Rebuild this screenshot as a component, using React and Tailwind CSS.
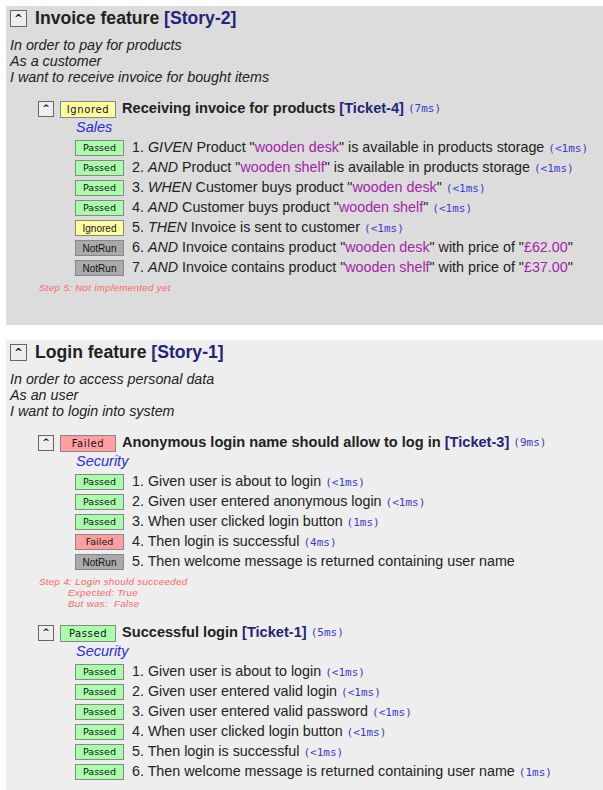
import React from 'react';

const features = [
  {
    title: 'Invoice feature',
    story: '[Story-2]',
    bg: 'bg-[#dcdcdc]',
    narrative: ['In order to pay for products', 'As a customer', 'I want to receive invoice for bought items'],
    scenarios: [
      {
        status: 'Ignored',
        title: 'Receiving invoice for products',
        ticket: '[Ticket-4]',
        time: '(7ms)',
        category: 'Sales',
        steps: [
          { status: 'Passed', parts: ['1. ', { k: 'GIVEN' }, ' Product "', { p: 'wooden desk' }, '" is available in products storage'], time: '(<1ms)' },
          { status: 'Passed', parts: ['2. ', { k: 'AND' }, ' Product "', { p: 'wooden shelf' }, '" is available in products storage'], time: '(<1ms)' },
          { status: 'Passed', parts: ['3. ', { k: 'WHEN' }, ' Customer buys product "', { p: 'wooden desk' }, '"'], time: '(<1ms)' },
          { status: 'Passed', parts: ['4. ', { k: 'AND' }, ' Customer buys product "', { p: 'wooden shelf' }, '"'], time: '(<1ms)' },
          { status: 'Ignored', parts: ['5. ', { k: 'THEN' }, ' Invoice is sent to customer'], time: '(<1ms)' },
          { status: 'NotRun', parts: ['6. ', { k: 'AND' }, ' Invoice contains product "', { p: 'wooden desk' }, '" with price of "', { p: '£62.00' }, '"'] },
          { status: 'NotRun', parts: ['7. ', { k: 'AND' }, ' Invoice contains product "', { p: 'wooden shelf' }, '" with price of "', { p: '£37.00' }, '"'] },
        ],
        error: ['Step 5: Not implemented yet'],
      },
    ],
  },
  {
    title: 'Login feature',
    story: '[Story-1]',
    bg: 'bg-[#eeeeee]',
    narrative: ['In order to access personal data', 'As an user', 'I want to login into system'],
    scenarios: [
      {
        status: 'Failed',
        title: 'Anonymous login name should allow to log in',
        ticket: '[Ticket-3]',
        time: '(9ms)',
        category: 'Security',
        steps: [
          { status: 'Passed', parts: ['1. Given user is about to login'], time: '(<1ms)' },
          { status: 'Passed', parts: ['2. Given user entered anonymous login'], time: '(<1ms)' },
          { status: 'Passed', parts: ['3. When user clicked login button'], time: '(1ms)' },
          { status: 'Failed', parts: ['4. Then login is successful'], time: '(4ms)' },
          { status: 'NotRun', parts: ['5. Then welcome message is returned containing user name'] },
        ],
        error: ['Step 4: Login should succeeded', 'Expected: True', 'But was:  False'],
      },
      {
        status: 'Passed',
        title: 'Successful login',
        ticket: '[Ticket-1]',
        time: '(5ms)',
        category: 'Security',
        steps: [
          { status: 'Passed', parts: ['1. Given user is about to login'], time: '(<1ms)' },
          { status: 'Passed', parts: ['2. Given user entered valid login'], time: '(<1ms)' },
          { status: 'Passed', parts: ['3. Given user entered valid password'], time: '(<1ms)' },
          { status: 'Passed', parts: ['4. When user clicked login button'], time: '(<1ms)' },
          { status: 'Passed', parts: ['5. Then login is successful'], time: '(<1ms)' },
          { status: 'Passed', parts: ['6. Then welcome message is returned containing user name'], time: '(1ms)' },
        ],
      },
    ],
  },
];

const badgeColors = {
  Passed: 'bg-[#aaffaa]',
  Failed: 'bg-[#ff9f9f]',
  Ignored: 'bg-[#ffffa0]',
  NotRun: 'bg-[#aaaaaa]',
};

const badgeFont = {
  Passed: "font-['DejaVu_Sans',sans-serif] text-[9.5px]",
  Failed: "font-['DejaVu_Sans',sans-serif] text-[9.5px]",
  Ignored: "font-['Liberation_Sans',Arial,sans-serif] text-[10px]",
  NotRun: "font-['Liberation_Sans',Arial,sans-serif] text-[10px]",
};

const Toggle = ({ big }) => (
  <span
    className={`flex items-center justify-center border border-[#666] bg-[#eeeeee] text-[#111] font-bold font-['DejaVu_Sans',sans-serif] shrink-0 ${
      big ? 'w-[17px] h-[17px] text-[10px]' : 'w-[16px] h-[16px] text-[9px]'
    }`}
  >
    ^
  </span>
);

const Duration = ({ t }) => (
  <span className="font-['DejaVu_Sans_Mono',monospace] text-[11px] text-[#3a3ad0] ml-[4px]">{t}</span>
);

const Step = ({ step }) => (
  <div className="flex items-center h-[20px] ml-[37px]">
    <span
      className={`w-[49px] h-[16px] border border-[#888] flex items-center justify-center text-[#111122] shrink-0 ${badgeColors[step.status]} ${badgeFont[step.status]}`}
    >
      {step.status}
    </span>
    <span className="ml-[8px] text-[14.3px] text-[#222] whitespace-nowrap">
      {step.parts.map((p, i) =>
        typeof p === 'string' ? (
          <span key={i}>{p}</span>
        ) : p.k ? (
          <i key={i}>{p.k}</i>
        ) : (
          <span key={i} className="text-[#a424a8]">
            {p.p}
          </span>
        )
      )}
      {step.time && <Duration t={step.time} />}
    </span>
  </div>
);

const Scenario = ({ sc }) => (
  <div className="ml-[28px] mt-[15px]">
    <div className="flex items-center h-[18px]">
      <Toggle />
      <span
        className={`ml-[6px] w-[56px] h-[17px] border border-[#888] flex items-center justify-center text-[#111122] tracking-[0.6px] font-['DejaVu_Sans',sans-serif] text-[10px] shrink-0 ${badgeColors[sc.status]}`}
      >
        {sc.status}
      </span>
      <span className="ml-[6px] text-[14.6px] font-bold text-[#222] whitespace-nowrap">
        {sc.title} <span className="text-[#24247a]">{sc.ticket}</span>
      </span>
      <Duration t={sc.time} />
    </div>
    <div className="h-[20px] flex items-center ml-[38px] italic text-[#2b2be6] text-[14.5px]">{sc.category}</div>
    {sc.steps.map((s, i) => (
      <Step key={i} step={s} />
    ))}
    {sc.error && (
      <div className="mt-[4px] mb-[6px] ml-[1px] italic text-[9.8px] leading-[11px] text-[#ff6666] tracking-[0.3px] whitespace-pre">
        {sc.error.map((e, i) => (
          <div key={i} className={i > 0 ? 'ml-[29px]' : ''}>
            {e}
          </div>
        ))}
      </div>
    )}
  </div>
);

const Feature = ({ f, last }) => (
  <div className={`ml-[6px] px-[4px] pt-[4px] ${last ? 'pb-[20px]' : 'pb-[26px] mb-[15px]'} ${f.bg}`}>
    <div className="flex items-center h-[17px]">
      <Toggle big />
      <span className="ml-[8px] text-[17.6px] font-bold text-[#222] whitespace-nowrap">
        {f.title} <span className="text-[#24247a]">{f.story}</span>
      </span>
    </div>
    <div className="mt-[10px] italic text-[14.3px] leading-[16px] text-[#222]">
      {f.narrative.map((n, i) => (
        <div key={i}>{n}</div>
      ))}
    </div>
    {f.scenarios.map((sc, i) => (
      <Scenario key={i} sc={sc} />
    ))}
  </div>
);

export default function App() {
  return (
    <div className="bg-white min-h-screen pt-[6px] font-['Liberation_Sans',Arial,sans-serif] overflow-hidden">
      {features.map((f, i) => (
        <Feature key={i} f={f} last={i === features.length - 1} />
      ))}
    </div>
  );
}
